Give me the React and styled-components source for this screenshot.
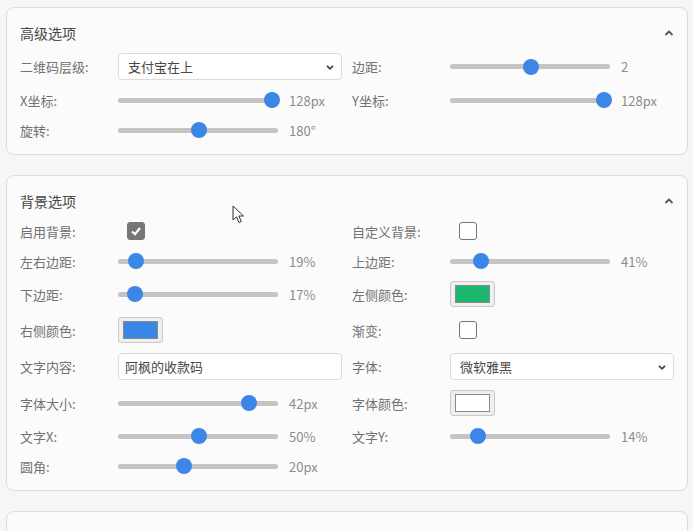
import React from "react";
import styled, { createGlobalStyle } from "styled-components";

const GlobalStyle = createGlobalStyle`
  html, body {
    margin: 0;
    padding: 0;
    background: #f6f6f6;
    font-family: "Noto Sans CJK SC", "Noto Sans", "Liberation Sans", sans-serif;
  }
`;

const Page = styled.div`
  position: relative;
  padding: 7px 5px 0 6px;
`;

const Card = styled.section`
  background: #fbfbfb;
  border: 1px solid #dcdcdc;
  border-radius: 8px;
  padding: 15px 13px 14px 13px;
  margin-bottom: 20px;
`;

const Header = styled.div`
  display: flex;
  align-items: center;
  justify-content: space-between;
  height: 20px;
  margin-bottom: 10px;
`;

const Title = styled.h3`
  margin: 0;
  font-size: 14px;
  font-weight: 400;
  color: #474747;
`;

const Grid = styled.div`
  display: grid;
  grid-template-columns: 1fr 1fr;
  column-gap: 10px;
  row-gap: 10px;
`;

const Field = styled.div`
  display: flex;
  align-items: center;
  min-height: 20px;
`;

const Label = styled.span`
  width: 98px;
  flex: none;
  font-size: 13px;
  color: #727272;
  white-space: nowrap;
`;

const SelectBox = styled.div`
  flex: 1;
  height: 27px;
  box-sizing: border-box;
  border: 1px solid #dcdcdc;
  border-radius: 4px;
  background: #fff;
  display: flex;
  align-items: center;
  justify-content: space-between;
  padding: 0 6px 0 9px;
  font-size: 13px;
  color: #484848;
`;

const TextBox = styled(SelectBox)`
  padding-left: 6px;
`;

const Track = styled.div`
  position: relative;
  width: 160px;
  height: 5px;
  border-radius: 3px;
  background: #c4c4c4;
  flex: none;
`;

const Thumb = styled.div`
  position: absolute;
  top: 50%;
  width: 16px;
  height: 16px;
  margin: -8px 0 0 -8px;
  border-radius: 50%;
  background: #3b86e6;
`;

const Value = styled.span`
  margin-left: 11px;
  font-size: 13px;
  color: #8c8c8c;
`;

const Check = styled.div`
  width: 18px;
  height: 18px;
  box-sizing: border-box;
  margin-left: 9px;
  border-radius: 3px;
  display: flex;
  align-items: center;
  justify-content: center;
  background: ${(p) => (p.$checked ? "#767676" : "#fff")};
  border: 1px solid #767676;
`;

const Swatch = styled.div`
  width: 45px;
  height: 26px;
  box-sizing: border-box;
  border: 1px solid #c9c9c9;
  border-radius: 3px;
  background: #efefef;
  padding: 3px 4px;
`;

const SwatchFill = styled.div`
  width: 100%;
  height: 100%;
  box-sizing: border-box;
  border: 1px solid #8a8a8a;
  background: ${(p) => p.$color};
`;

const Cursor = styled.svg`
  position: absolute;
  left: 232px;
  top: 205px;
`;

const Chevron = ({ up }) => (
  <svg width="10" height="10" viewBox="0 0 10 10">
    <polyline
      points={up ? "1.5,7 5,3.5 8.5,7" : "2,3.8 5,6.8 8,3.8"}
      fill="none"
      stroke={up ? "#555" : "#444"}
      strokeWidth="1.8"
    />
  </svg>
);

const Slider = ({ pos, value }) => (
  <>
    <Track>
      <Thumb style={{ left: `${8 + pos * 146}px` }} />
    </Track>
    <Value>{value}</Value>
  </>
);

const Checkbox = ({ checked }) => (
  <Check $checked={checked}>
    {checked && (
      <svg width="12" height="12" viewBox="0 0 12 12">
        <polyline points="2,6.5 5,9.2 10,3" fill="none" stroke="#fff" strokeWidth="2.2" />
      </svg>
    )}
  </Check>
);

const Select = ({ text }) => (
  <SelectBox>
    <span>{text}</span>
    <Chevron />
  </SelectBox>
);

const Color = ({ color }) => (
  <Swatch>
    <SwatchFill $color={color} />
  </Swatch>
);

export default function App() {
  return (
    <Page>
      <GlobalStyle />
      <Card>
        <Header>
          <Title>高级选项</Title>
          <Chevron up />
        </Header>
        <Grid>
          <Field>
            <Label>二维码层级:</Label>
            <Select text="支付宝在上" />
          </Field>
          <Field>
            <Label>边距:</Label>
            <Slider pos={0.5} value="2" />
          </Field>
          <Field>
            <Label>X坐标:</Label>
            <Slider pos={1} value="128px" />
          </Field>
          <Field>
            <Label>Y坐标:</Label>
            <Slider pos={1} value="128px" />
          </Field>
          <Field>
            <Label>旋转:</Label>
            <Slider pos={0.5} value="180°" />
          </Field>
        </Grid>
      </Card>

      <Card>
        <Header>
          <Title>背景选项</Title>
          <Chevron up />
        </Header>
        <Grid>
          <Field>
            <Label>启用背景:</Label>
            <Checkbox checked />
          </Field>
          <Field>
            <Label>自定义背景:</Label>
            <Checkbox />
          </Field>
          <Field>
            <Label>左右边距:</Label>
            <Slider pos={0.07} value="19%" />
          </Field>
          <Field>
            <Label>上边距:</Label>
            <Slider pos={0.16} value="41%" />
          </Field>
          <Field>
            <Label>下边距:</Label>
            <Slider pos={0.063} value="17%" />
          </Field>
          <Field>
            <Label>左侧颜色:</Label>
            <Color color="#1bb66b" />
          </Field>
          <Field>
            <Label>右侧颜色:</Label>
            <Color color="#3a86e6" />
          </Field>
          <Field>
            <Label>渐变:</Label>
            <Checkbox />
          </Field>
          <Field>
            <Label>文字内容:</Label>
            <TextBox>阿枫的收款码</TextBox>
          </Field>
          <Field>
            <Label>字体:</Label>
            <Select text="微软雅黑" />
          </Field>
          <Field>
            <Label>字体大小:</Label>
            <Slider pos={0.84} value="42px" />
          </Field>
          <Field>
            <Label>字体颜色:</Label>
            <Color color="#ffffff" />
          </Field>
          <Field>
            <Label>文字X:</Label>
            <Slider pos={0.5} value="50%" />
          </Field>
          <Field>
            <Label>文字Y:</Label>
            <Slider pos={0.137} value="14%" />
          </Field>
          <Field>
            <Label>圆角:</Label>
            <Slider pos={0.4} value="20px" />
          </Field>
        </Grid>
      </Card>

      <Card>
        <Header>
          <Title>其他选项</Title>
          <Chevron up />
        </Header>
        <Grid>
          <Field>
            <Label>输出尺寸:</Label>
            <Slider pos={0.5} value="512px" />
          </Field>
        </Grid>
      </Card>

      <Cursor width="14" height="20" viewBox="0 0 14 20">
        <path d="M1 1 L1 15 L4.5 11.8 L7 17.5 L9.3 16.5 L6.9 11 L11.5 11 Z" fill="#fff" stroke="#333" strokeWidth="1" strokeLinejoin="round" />
      </Cursor>
    </Page>
  );
}
